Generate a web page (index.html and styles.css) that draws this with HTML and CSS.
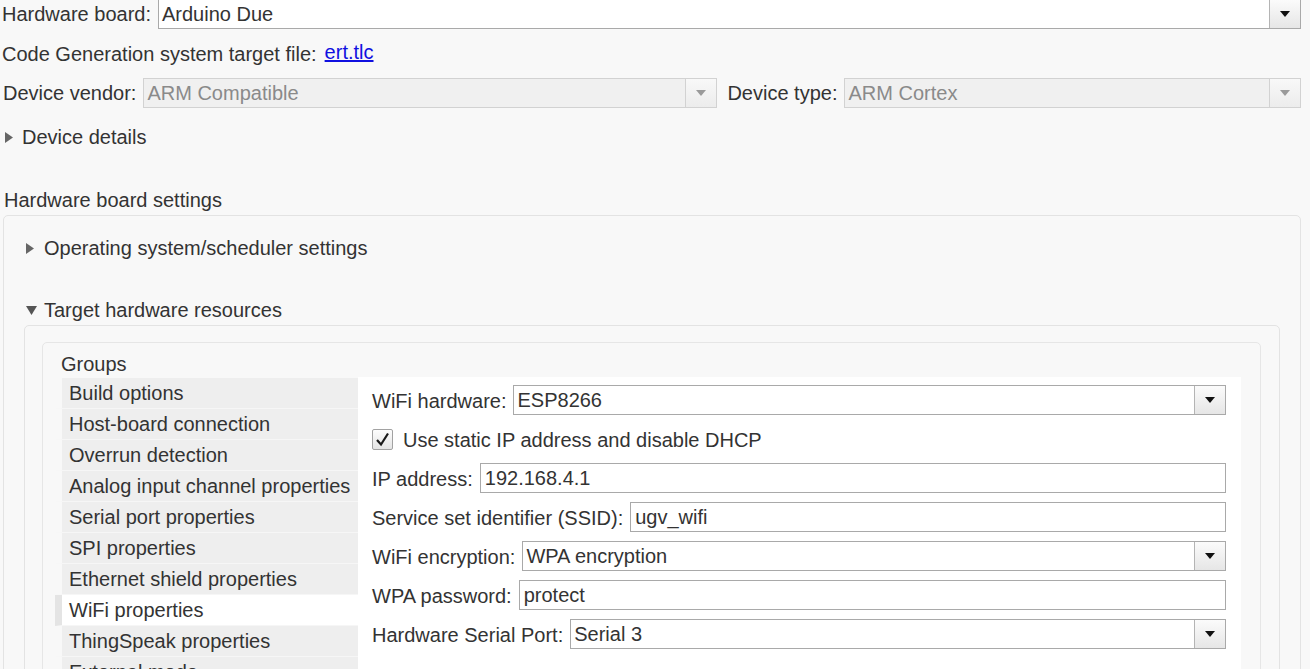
FILE: index.html
```html
<!DOCTYPE html>
<html>
<head>
<meta charset="utf-8">
<link rel="stylesheet" href="styles.css">
</head>
<body>
<div class="top">
  <div class="row r1">
    <span class="lbl">Hardware board:</span>
    <div class="select grow"><span class="val">Arduino Due</span><span class="btn"><svg width="10" height="6" viewBox="0 0 10 6"><polygon points="0,0 10,0 5,6" fill="#111"/></svg></span></div>
  </div>
  <div class="row r2">
    <span class="lbl">Code Generation system target file:</span>
    <a class="link" href="#">ert.tlc</a>
  </div>
  <div class="row r3">
    <span class="lbl">Device vendor:</span>
    <div class="select disabled vendor"><span class="val">ARM Compatible</span><span class="btn"><svg width="10" height="6" viewBox="0 0 10 6"><polygon points="0,0 10,0 5,6" fill="#9a9a9a"/></svg></span></div>
    <span class="lbl type-lbl">Device type:</span>
    <div class="select disabled grow"><span class="val">ARM Cortex</span><span class="btn"><svg width="10" height="6" viewBox="0 0 10 6"><polygon points="0,0 10,0 5,6" fill="#9a9a9a"/></svg></span></div>
  </div>
  <div class="toggle r4">
    <span class="tri"><svg width="8" height="11" viewBox="0 0 8 11"><polygon points="0,0 8,5.5 0,11" fill="#666"/></svg></span>
    <span>Device details</span>
  </div>
</div>

<div class="section-title">Hardware board settings</div>

<div class="panel outer">
  <div class="toggle os">
    <span class="tri"><svg width="8" height="11" viewBox="0 0 8 11"><polygon points="0,0 8,5.5 0,11" fill="#666"/></svg></span>
    <span>Operating system/scheduler settings</span>
  </div>
  <div class="toggle thr">
    <span class="tri"><svg width="11" height="9" viewBox="0 0 11 9"><polygon points="0,0 11,0 5.5,9" fill="#555"/></svg></span>
    <span>Target hardware resources</span>
  </div>
  <div class="panel target">
    <div class="panel groups">
      <div class="groups-title">Groups</div>
      <div class="groups-body">
        <ul class="glist">
          <li>Build options</li>
          <li>Host-board connection</li>
          <li>Overrun detection</li>
          <li>Analog input channel properties</li>
          <li>Serial port properties</li>
          <li>SPI properties</li>
          <li>Ethernet shield properties</li>
          <li class="sel">WiFi properties</li>
          <li>ThingSpeak properties</li>
          <li>External mode</li>
        </ul>
        <div class="gpane">
          <div class="frow">
            <span class="lbl">WiFi hardware:</span>
            <div class="select grow"><span class="val">ESP8266</span><span class="btn"><svg width="10" height="6" viewBox="0 0 10 6"><polygon points="0,0 10,0 5,6" fill="#111"/></svg></span></div>
          </div>
          <div class="frow check-row">
            <span class="checkbox"><svg width="19" height="19" viewBox="0 0 19 19"><path d="M4 10 L8 14.5 L15 3.5" fill="none" stroke="#1a1a1a" stroke-width="2.2"/></svg></span>
            <span class="lbl">Use static IP address and disable DHCP</span>
          </div>
          <div class="frow">
            <span class="lbl">IP address:</span>
            <div class="input grow">192.168.4.1</div>
          </div>
          <div class="frow">
            <span class="lbl">Service set identifier (SSID):</span>
            <div class="input grow">ugv_wifi</div>
          </div>
          <div class="frow">
            <span class="lbl">WiFi encryption:</span>
            <div class="select grow"><span class="val">WPA encryption</span><span class="btn"><svg width="10" height="6" viewBox="0 0 10 6"><polygon points="0,0 10,0 5,6" fill="#111"/></svg></span></div>
          </div>
          <div class="frow">
            <span class="lbl">WPA password:</span>
            <div class="input grow">protect</div>
          </div>
          <div class="frow">
            <span class="lbl">Hardware Serial Port:</span>
            <div class="select grow"><span class="val">Serial 3</span><span class="btn"><svg width="10" height="6" viewBox="0 0 10 6"><polygon points="0,0 10,0 5,6" fill="#111"/></svg></span></div>
          </div>
        </div>
      </div>
    </div>
  </div>
</div>
</body>
</html>
```

FILE: styles.css
```css
html, body {
  margin: 0;
  padding: 0;
}
body {
  background: #f8f8f8;
  font-family: "Liberation Sans", Arial, sans-serif;
  font-size: 20px;
  color: #333;
  width: 1310px;
  height: 669px;
  overflow: hidden;
}
.top {
  padding-left: 2px;
  padding-right: 9px;
  margin-top: -1px;
}
.row {
  display: flex;
  align-items: center;
  height: 30px;
  gap: 7px;
}
.lbl {
  white-space: nowrap;
  line-height: 23px;
}
.r2 {
  margin-top: 10px;
  gap: 8px;
}
.r3 {
  margin-top: 9px;
}
.r3 > .lbl:first-child {
  margin-left: 1px;
}
.link {
  color: #1010e0;
  text-decoration: underline;
  position: relative;
  top: -2px;
}
.type-lbl {
  margin-left: 3px;
}
.grow {
  flex: 1;
}
.select, .input {
  box-sizing: border-box;
  height: 30px;
  border: 1px solid #a9a9a9;
  background: #fff;
  display: flex;
  align-items: center;
  min-width: 0;
}
.input {
  padding-left: 4px;
  padding-top: 1px;
  line-height: 23px;
}
.select .val {
  flex: 1;
  padding-left: 3px;
  padding-top: 1px;
  white-space: nowrap;
  line-height: 23px;
}
.select .btn {
  width: 30px;
  height: 28px;
  border-left: 1px solid #b4b4b4;
  background: linear-gradient(#fbfbfb, #e6e6e6);
  display: flex;
  align-items: center;
  justify-content: center;
}
.select.disabled {
  background: #f0f0f0;
  border-color: #d2d2d2;
  color: #8a8a8a;
}
.select.disabled .btn {
  border-left-color: #d2d2d2;
  background: linear-gradient(#f8f8f8, #ececec);
}
.vendor {
  width: 574px;
  flex: none;
}
.toggle {
  display: flex;
  align-items: center;
  height: 30px;
}
.tri {
  width: 12px;
  margin-right: 6px;
  display: flex;
  align-items: center;
}
.r4 {
  margin-top: 14px;
  padding-left: 3px;
}
.r4 .tri {
  margin-right: 5px;
}
.section-title {
  margin-top: 33px;
  height: 30px;
  line-height: 30px;
  padding-left: 4px;
}
.panel {
  border: 1px solid #e3e3e3;
  border-radius: 5px;
}
.outer {
  margin-left: 3px;
  width: 1298px;
  box-sizing: border-box;
  height: 600px;
}
.os {
  margin-top: 17px;
  padding-left: 22px;
}
.thr {
  margin-top: 32px;
  padding-left: 22px;
}
.target {
  margin: 0 20px 0 20px;
  height: 500px;
}
.groups {
  margin: 16px 18px 0 17px;
  height: 480px;
  border-color: #e6e6e6;
}
.groups-title {
  padding: 10px 0 0 18px;
  line-height: 23px;
  height: 23px;
  margin-bottom: 1px;
}
.groups-body {
  display: flex;
  margin-left: 12px;
  margin-right: 19px;
  align-items: flex-start;
}
.glist {
  list-style: none;
  margin: 0;
  padding: 1px 0 0 0;
  width: 303px;
  flex: none;
}
.glist li {
  height: 30px;
  line-height: 31px;
  border-left: 7px solid transparent;
  border-bottom: 1px solid #f6f6f6;
  background: #eeeeee;
  background-clip: padding-box;
  padding-left: 7px;
  white-space: nowrap;
  overflow: hidden;
}
.glist li.sel {
  background: #fff;
  border-left-color: #e4e4e4;
  background-clip: padding-box;
}
.gpane {
  flex: 1;
  background: #fff;
  padding: 8px 15px 40px 14px;
  display: flex;
  flex-direction: column;
  gap: 9px;
}
.frow {
  display: flex;
  align-items: center;
  height: 30px;
  gap: 7px;
}
.frow > .lbl {
  padding-top: 2px;
}
.check-row {
  gap: 10px;
}
.checkbox {
  box-sizing: border-box;
  width: 21px;
  height: 21px;
  border: 1px solid #a2a2a2;
  border-radius: 2px;
  background: linear-gradient(#fdfdfd, #e4e4e4);
  display: flex;
  align-items: center;
  justify-content: center;
}
```
